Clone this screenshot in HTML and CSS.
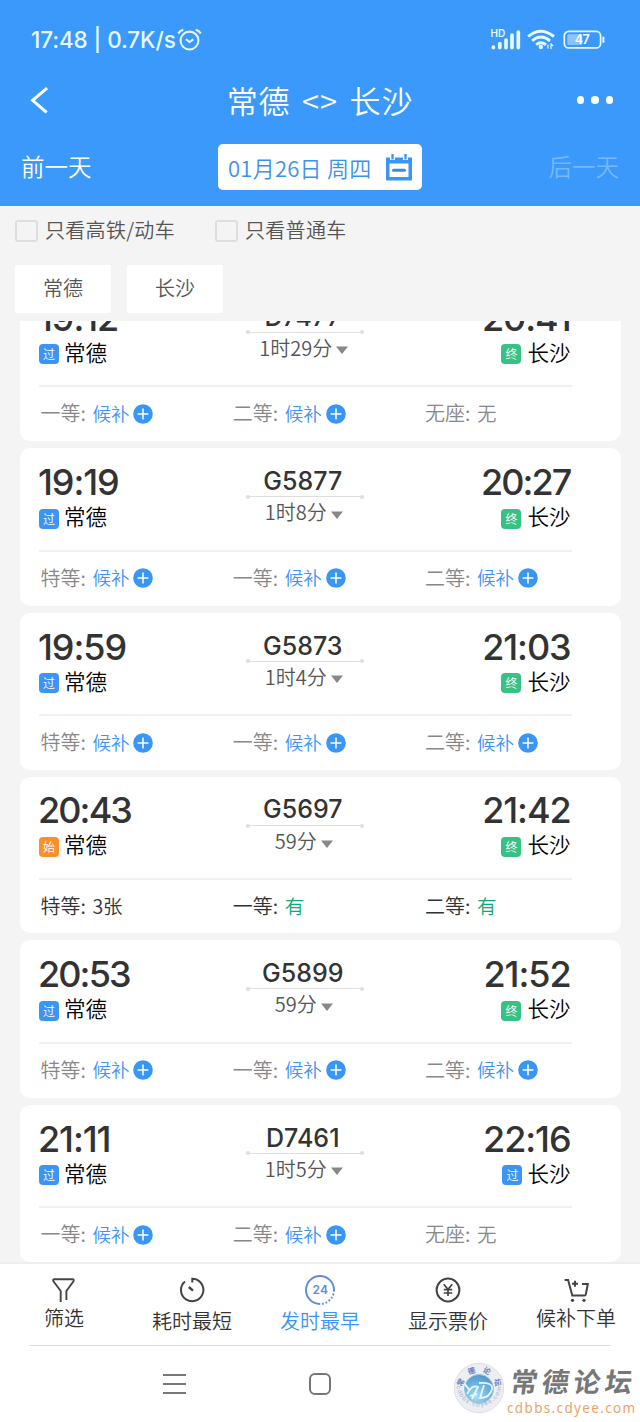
FILE: index.html
```html
<!DOCTYPE html>
<html lang="zh-CN">
<head>
<meta charset="utf-8">
<title>常德 - 长沙</title>
<link rel="stylesheet" href="styles.css">
</head>
<body>
<svg class="defs" aria-hidden="true">
  <symbol id="plus" viewBox="0 0 20 20"><circle cx="10" cy="10" r="9.8" fill="#3996f5"/><path d="M10 4.6v10.8M4.6 10h10.8" stroke="#fff" stroke-width="1.5"/></symbol>
  <symbol id="down" viewBox="0 0 12 8"><path d="M0 .4h12L6 8z" fill="#888"/></symbol>
</svg>
<header class="header">
  <div class="status">
    <span class="status-text">17:48 | 0.7K/s</span>
    <svg class="alarm" viewBox="0 0 24 24" fill="none" stroke="#e6faff" stroke-width="2"><circle cx="12" cy="13" r="8.6"/><path d="M8.6 11.8l3.4 2.6 3.7-2.6M1.2 6.3Q2.8 3.5 6 2.6M22.8 6.3Q21.2 3.5 18 2.6"/></svg>
    <svg class="signals" viewBox="0 0 118 26">
      <text class="hd" x="1.5" y="9.8">HD</text>
      <g stroke="#e6faff" stroke-width="3.7" stroke-linecap="round"><path d="M4.4 20.2v.4M10.8 16.5v4.1M17 13v7.6M23 8v12.6M29.3 5v15.6"/></g>
      <g fill="none" stroke="#e6faff" stroke-width="2.9"><path d="M39.2 9.5Q51.5-1.2 65 9.5M43.2 13.8Q51.5 6.2 61 13.8M47.2 17.7Q51.5 13.8 57 17.7"/></g>
      <circle cx="51.8" cy="20" r="2.2" fill="#e6faff"/>
      <path d="M59 21.5v-4M62 16v6m0-5l2 2" stroke="#e6faff" stroke-width="1.2" fill="none"/>
      <rect x="75.3" y="4.3" width="36.3" height="16.6" rx="4.5" fill="none" stroke="#e6faff" stroke-width="1.7"/>
      <rect x="78.3" y="7.2" width="15" height="10.8" rx="1.5" fill="#8ac4ff"/>
      <path d="M114.4 9.7v6" stroke="#e6faff" stroke-width="2"/>
      <text class="battery" x="85.8" y="17.2">47</text>
    </svg>
  </div>
  <div class="titlebar">
    <svg class="back" viewBox="0 0 20 28" fill="none" stroke="#fff" stroke-width="3"><path d="M18 2.2L3.6 14.3l14 12"/></svg>
    <h1>常德 &lt;&gt; 长沙</h1>
    <span class="more"><i></i><i></i><i></i></span>
  </div>
  <div class="daybar">
    <span class="prev">前一天</span>
    <span class="date"><span>01月26日 周四</span>
      <svg viewBox="0 0 28 28"><path d="M1 4.5h26v22q0 1-1 1H2q-1 0-1-1z" fill="#3996f5"/><path d="M4.5 10.5h19V24h-19z" fill="#fff"/><path d="M7.5 2v5M20.5 2v5" stroke="#fff" stroke-width="5"/><path d="M7.5 1v5.5M20.5 1v5.5" stroke="#3996f5" stroke-width="2.3"/><path d="M8.5 17.3h11" stroke="#3f8bd2" stroke-width="3" stroke-linecap="round"/></svg></span>
    <span class="next">后一天</span>
  </div>
</header>
<section class="filters">
  <label class="check first"><i></i>只看高铁/动车</label>
  <label class="check"><i></i>只看普通车</label>
</section>
<section class="chips"><span>常德</span><span>长沙</span></section>
<main class="viewport"><div class="list">
  <article class="card">
    <div class="trip">
      <div class="from"><b>19:12</b><span class="city"><i class="tag">过</i>常德</span></div>
      <div class="train"><b>D7477</b><i class="rail"></i><span>1时29分<svg><use href="#down"/></svg></span></div>
      <div class="to"><b>20:41</b><span class="city"><i class="tag end">终</i>长沙</span></div>
    </div>
    <div class="seats"><span>一等:<em>候补</em><svg><use href="#plus"/></svg></span><span>二等:<em>候补</em><svg><use href="#plus"/></svg></span><span>无座:<small>无</small></span></div>
  </article>
  <article class="card">
    <div class="trip">
      <div class="from"><b>19:19</b><span class="city"><i class="tag">过</i>常德</span></div>
      <div class="train"><b>G5877</b><i class="rail"></i><span>1时8分<svg><use href="#down"/></svg></span></div>
      <div class="to"><b class="wide">20:27</b><span class="city"><i class="tag end">终</i>长沙</span></div>
    </div>
    <div class="seats"><span>特等:<em>候补</em><svg><use href="#plus"/></svg></span><span>一等:<em>候补</em><svg><use href="#plus"/></svg></span><span>二等:<em>候补</em><svg><use href="#plus"/></svg></span></div>
  </article>
  <article class="card">
    <div class="trip">
      <div class="from"><b>19:59</b><span class="city"><i class="tag">过</i>常德</span></div>
      <div class="train"><b>G5873</b><i class="rail"></i><span>1时4分<svg><use href="#down"/></svg></span></div>
      <div class="to"><b>21:03</b><span class="city"><i class="tag end">终</i>长沙</span></div>
    </div>
    <div class="seats"><span>特等:<em>候补</em><svg><use href="#plus"/></svg></span><span>一等:<em>候补</em><svg><use href="#plus"/></svg></span><span>二等:<em>候补</em><svg><use href="#plus"/></svg></span></div>
  </article>
  <article class="card open">
    <div class="trip">
      <div class="from"><b class="wide">20:43</b><span class="city"><i class="tag start">始</i>常德</span></div>
      <div class="train"><b>G5697</b><i class="rail"></i><span>59分<svg><use href="#down"/></svg></span></div>
      <div class="to"><b>21:42</b><span class="city"><i class="tag end">终</i>长沙</span></div>
    </div>
    <div class="seats"><span>特等:<small>3张</small></span><span>一等:<small class="yes">有</small></span><span>二等:<small class="yes">有</small></span></div>
  </article>
  <article class="card">
    <div class="trip">
      <div class="from"><b class="wide">20:53</b><span class="city"><i class="tag">过</i>常德</span></div>
      <div class="train"><b>G5899</b><i class="rail"></i><span>59分<svg><use href="#down"/></svg></span></div>
      <div class="to"><b>21:52</b><span class="city"><i class="tag end">终</i>长沙</span></div>
    </div>
    <div class="seats"><span>特等:<em>候补</em><svg><use href="#plus"/></svg></span><span>一等:<em>候补</em><svg><use href="#plus"/></svg></span><span>二等:<em>候补</em><svg><use href="#plus"/></svg></span></div>
  </article>
  <article class="card">
    <div class="trip">
      <div class="from"><b>21:11</b><span class="city"><i class="tag">过</i>常德</span></div>
      <div class="train"><b>D7461</b><i class="rail"></i><span>1时5分<svg><use href="#down"/></svg></span></div>
      <div class="to"><b>22:16</b><span class="city"><i class="tag">过</i>长沙</span></div>
    </div>
    <div class="seats"><span>一等:<em>候补</em><svg><use href="#plus"/></svg></span><span>二等:<em>候补</em><svg><use href="#plus"/></svg></span><span>无座:<small>无</small></span></div>
  </article>
</div></main>
<footer class="tabs">
  <div class="tab raised"><svg viewBox="0 0 32 32" fill="none" stroke="#444" stroke-width="1.9"><path d="M12.7 28V17L5.4 7.3Q4.6 5.3 6.5 5.3h18q1.9 0 1 2L18.4 17v9" stroke-linejoin="round"/></svg>筛选</div>
  <div class="tab"><svg viewBox="0 0 32 32" fill="none" stroke="#444" stroke-width="2"><path d="M16.3 8.5V4.8A11.2 11.2 0 1 1 9 7.4" /><path d="M12.8 13l4.2 3.6" stroke-width="2.4"/></svg>耗时最短</div>
  <div class="tab active"><svg viewBox="0 0 32 32" fill="none" stroke="#5f8cdf" stroke-width="2"><path d="M16 30A14 14 0 1 1 30 16"/><path d="M30 16A14 14 0 0 1 16 30" stroke-dasharray="1.8 1.8"/><text x="8.6" y="20.3" stroke="none">24</text></svg>发时最早</div>
  <div class="tab"><svg viewBox="0 0 32 32" fill="none" stroke="#444" stroke-width="2"><circle cx="16" cy="16" r="11.4"/><path d="M11.7 10.2l4.3 5 4.3-5M16 15v7M11.8 15.7h8.4M11.8 19h8.4" stroke-width="1.7"/></svg>显示票价</div>
  <div class="tab raised"><svg viewBox="0 0 32 32" fill="none" stroke="#444" stroke-width="2"><path d="M4.6 6h3.5l4.2 15.5h12.2q1 0 1.3-1l2-10.5H22M12 9.7h6M15 6.7v6"/><g fill="#444" stroke="none"><circle cx="12.5" cy="26.3" r="1.6"/><circle cx="24" cy="26.3" r="1.6"/></g></svg>候补下单</div>
</footer>
<nav class="system"><span class="menu"><i></i><i></i><i></i></span><span class="home"></span></nav>
<div class="watermark">
  <svg viewBox="0 0 52 52">
    <defs>
      <radialGradient id="disc" cx=".4" cy=".75" r=".8"><stop offset="0" stop-color="#a7def4"/><stop offset=".6" stop-color="#66b1df"/><stop offset="1" stop-color="#5192c8"/></radialGradient>
      <path id="arcTop" d="M9.5 25.5A16.6 16.6 0 0 1 42.6 26"/>
      <path id="arcLow" d="M3.5 24A22.6 22.6 0 0 0 48.5 24"/>
    </defs>
    <circle cx="26" cy="26" r="24.7" fill="#eceef2" stroke="#dcdfe4"/>
    <circle cx="26" cy="27" r="14.5" fill="url(#disc)" stroke="#9cc6dd"/>
    <path d="M9 18l8 11M14 32q5-10 11-7l-6 12M17 34l7-2M26 21q14-1 13 6-2 9-12 9l4-13" fill="none" stroke="#e8f6fc" stroke-width="1.8"/>
    <text class="seal"><textPath href="#arcTop">常德论坛</textPath></text>
    <text class="sealurl"><textPath href="#arcLow">cdbbs.cdyee.com</textPath></text>
  </svg>
  <div class="wm-text"><strong>常德论坛</strong><span>cdbbs.cdyee.com</span></div>
</div>
</body>
</html>
```
FILE: styles.css
```css
* { box-sizing: border-box; }
body { margin: 0; width: 640px; height: 1422px; overflow: hidden; position: relative; background: #f4f4f4; font-family: "Noto Sans CJK SC", sans-serif; font-weight: 350; color: #333; display: flex; flex-direction: column; }
i, em { font-style: normal; }
.defs { display: none; }

.header { height: 206px; flex: none; background: #3b99fc; color: #fff; padding-top: 20px; }
.status { height: 40px; padding: 0 33px 0 31px; display: flex; align-items: center; }
.status-text { font: 450 22.5px/40px Inter, sans-serif; letter-spacing: -.1px; color: #e6faff; width: 146px; white-space: nowrap; }
.alarm { width: 25px; height: 25px; margin-top: -2px; }
.signals { width: 118px; height: 26px; margin-left: auto; }
.hd { font: 600 10px Inter, sans-serif; fill: #e6faff; }
.battery { font: 600 12.5px Inter, sans-serif; fill: #fff; letter-spacing: -.5px; }
.titlebar { height: 80px; display: grid; grid-template-columns: 120px 1fr 120px; align-items: center; }
.back { width: 20px; height: 28px; margin-left: 29px; }
h1 { margin: 0; font-weight: 350; font-size: 31px; line-height: 40px; text-align: center; word-spacing: 4px; letter-spacing: .85px; white-space: nowrap; }
.more { display: flex; gap: 7px; justify-content: flex-end; padding-right: 27px; }
.more i { width: 7.5px; height: 7.5px; border-radius: 50%; background: #fff; }
.daybar { display: grid; grid-template-columns: 1fr 204px 1fr; padding: 4px 21px 0; font-size: 23.5px; line-height: 44px; }
.next { text-align: right; color: #76b8ff; }
.date { height: 46px; border-radius: 5px; background: #fff; color: #3d91e6; display: flex; align-items: center; justify-content: space-between; padding: 0 9px 0 10px; font-size: 22px; letter-spacing: .25px; white-space: nowrap; }
.date svg { width: 28px; height: 28px; margin-top: -1px; }

.filters { height: 47px; flex: none; display: flex; padding-left: 15px; color: #555; font-size: 20px; line-height: 46px; }
.check { display: flex; align-items: center; gap: 7px; letter-spacing: .3px; }
.check.first { width: 200px; }
.check i { width: 23px; height: 22px; border: 2px solid #dedede; border-radius: 3px; margin-top: 3px; }
.chips { flex: none; height: 68px; padding: 12px 15px 8px; display: flex; gap: 16px; }
.chips span { width: 96px; background: #fff; border-radius: 2px; text-align: center; font-size: 20px; line-height: 46px; color: #555; }

.viewport { height: 941px; flex: none; overflow: hidden; padding: 0 19.5px; }
.list { margin-top: -37.5px; display: flex; flex-direction: column; gap: 7px; }
.card { height: 157.5px; flex: none; background: #fff; border-radius: 10px; padding: 13px 49px 0 19.5px; }
.card.open { height: 156px; padding-top: 12px; }
.trip { height: 90.5px; display: grid; grid-template-columns: 1fr 140px 1fr; border-bottom: 2px solid #f1f1f1; }
.from, .to { display: flex; flex-direction: column; }
.from b, .to b { font: 500 36px/43px Inter, sans-serif; letter-spacing: -1.1px; margin-left: -1px; }
.from b.wide, .to b.wide { letter-spacing: -1.9px; }
.to { align-items: flex-end; padding-right: 1px; }
.city { display: flex; align-items: center; gap: 5px; height: 24px; font-size: 21.5px; line-height: 24px; color: #000; }
.tag { width: 20px; height: 20px; margin-top: 5px; border-radius: 4px; background: #3b95f5; color: #fff; font-size: 12px; line-height: 19px; text-align: center; }
.tag.end { background: #38c184; margin-right: 1px; }
.tag.start { background: #fb9027; }
.train { display: flex; flex-direction: column; align-items: center; }
.train b { font: 500 25px/35px Inter, sans-serif; letter-spacing: .05px; margin: 3px 5px 0 0; height: 31px; }
.rail { width: 118px; height: 1px; background: #dedede; display: flex; justify-content: space-between; align-items: center; margin: 1px 1px 0 0; flex: none; }
.open .rail { margin-top: 2px; }
.rail::before, .rail::after { content: ""; width: 4px; height: 4px; border-radius: 50%; background: #dedede; }
.train span { font-size: 20px; line-height: 29px; color: #555; display: flex; align-items: center; margin-right: 3px; }
.train svg { width: 12px; height: 8px; margin: 6px 0 0 4px; }
.seats { height: 51px; display: grid; grid-template-columns: repeat(3, 192.3px); font-size: 20px; color: #888; }
.seats span { display: flex; align-items: center; padding-left: 1.5px; white-space: nowrap; }
.seats em { color: #3b95f5; font-size: 18.5px; margin-left: 6.5px; }
.seats svg { width: 20px; height: 20px; margin: 2px 0 0 4px; }
.seats small { font-size: 19.5px; margin-left: 6.5px; }
.open .seats { color: #333; }
.open .seats small { margin-top: 1px; }
.seats .yes { color: #12a874; }

.tabs { height: 83px; flex: none; display: grid; grid-template-columns: repeat(5, 128px); background: #fff; border-top: 2px solid #eee; }
.tab { display: flex; flex-direction: column; align-items: center; padding-top: 10px; font-size: 20px; line-height: 29px; font-weight: 350; white-space: nowrap; }
.tab svg { width: 32px; height: 32px; flex: none; }
.tab.raised { line-height: 23px; }
.tab text { font: 600 12px Inter, sans-serif; fill: #5f8cdf; }
.active { color: #3b95f5; }
.system { flex: 1; background: #fff; display: flex; padding: 28px 0 0 163px; gap: 123px; }
.system::before { content: ""; width: 582px; height: 1px; background: #ddd; position: absolute; left: 29px; top: 1345px; }
.menu { width: 23px; height: 22px; display: flex; flex-direction: column; justify-content: space-between; padding: 1px 0; }
.menu i { height: 2px; background: #777; }
.home { width: 22px; height: 22px; border: 2px solid #777; border-radius: 6px; }

.watermark { position: absolute; left: 453px; top: 1362px; width: 187px; display: flex; }
.watermark > svg { width: 52px; height: 52px; flex: none; }
.seal { font: 700 7.5px "Noto Sans CJK SC", sans-serif; fill: #6280bd; letter-spacing: 6px; }
.sealurl { font: 500 6px Inter, sans-serif; fill: #aebbd2; letter-spacing: 1px; }
.wm-text { display: flex; flex-direction: column; padding-left: 2px; }
.wm-text strong { font-size: 27px; font-weight: 700; line-height: 38px; letter-spacing: 4.4px; padding-left: 4px; color: #777; transform: skewX(-8deg); white-space: nowrap; }
.wm-text span { font: 400 13.5px/16px "Noto Sans", sans-serif; letter-spacing: 1.35px; color: #eca369; white-space: nowrap; }
```
